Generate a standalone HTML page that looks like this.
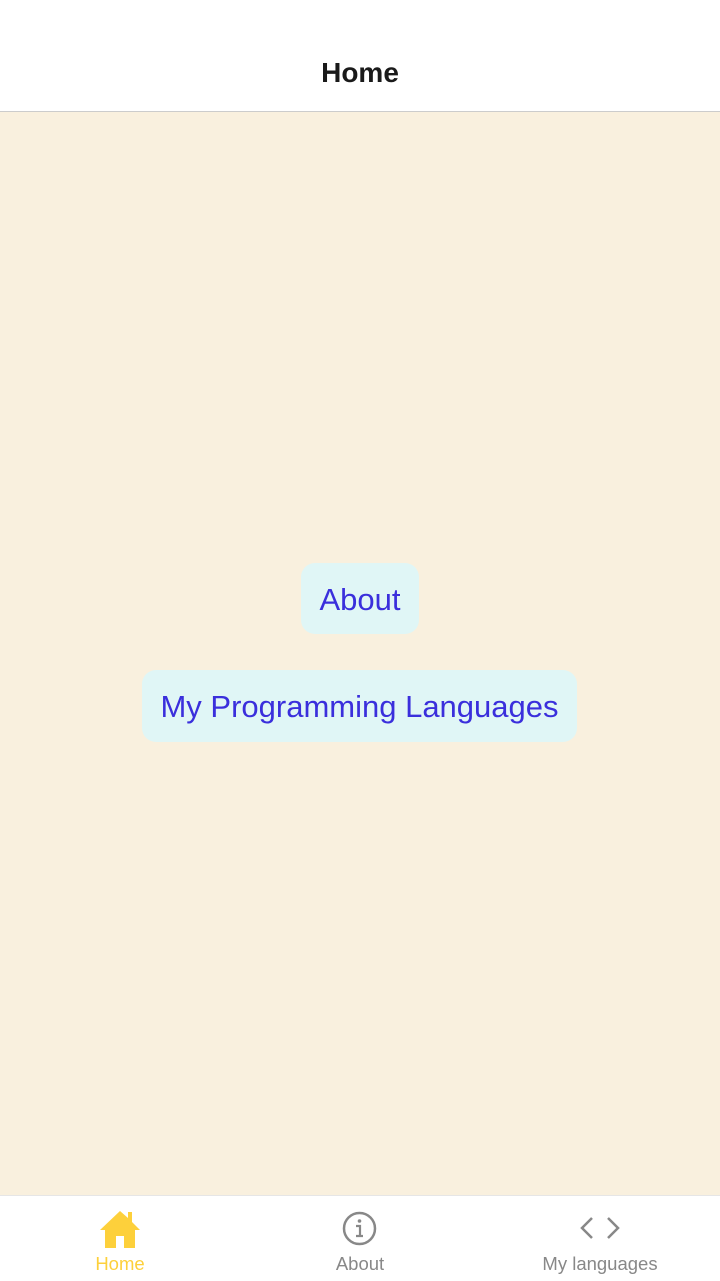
<!DOCTYPE html>
<html><head><style>
body{margin:0;width:720px;height:1280px;position:relative;font-family:"Liberation Sans",sans-serif;background:#f9f0de;overflow:hidden}
.hdr{position:absolute;top:0;left:0;width:720px;height:111px;background:#fff;border-bottom:1px solid #ccc}
.hdr div{position:absolute;top:57px;width:100%;text-align:center;font-size:28px;font-weight:bold;color:#1a1a1a}
.btn{position:absolute;background:#e0f6f6;border-radius:14px;color:#3a2fdc;font-size:31px;text-align:center;line-height:74px}
.tab{position:absolute;top:1195px;left:0;width:720px;height:85px;background:#fff;border-top:1px solid #e6e6e6}
.t{position:absolute;top:57px;width:240px;text-align:center;font-size:18.5px;color:#888}
</style></head><body>
<div class="hdr"><div>Home</div></div>
<div class="btn" style="left:301px;top:563px;width:118px;height:71px">About</div>
<div class="btn" style="left:142px;top:670px;width:435px;height:72px">My Programming Languages</div>
<div class="tab">
<svg style="position:absolute;left:99px;top:14px" width="42" height="38" viewBox="0 0 42 38"><path d="M21 1 L1 20 H6 V38 H17 V26 H25 V38 H36 V20 H41 L33 12 V2 H29 V8 Z" fill="#fdd03b"/></svg>
<svg style="position:absolute;left:342px;top:15px" width="35" height="35" viewBox="0 0 35 35"><circle cx="17.5" cy="17.5" r="15.5" fill="none" stroke="#888" stroke-width="2.5"/><circle cx="17.5" cy="10" r="1.8" fill="#888"/><path d="M14 15 H18 V25 M14 25 H21" fill="none" stroke="#888" stroke-width="2.2"/></svg>
<svg style="position:absolute;left:580px;top:20px" width="40" height="24" viewBox="0 0 40 24"><path d="M12 2 L2 12 L12 22 M28 2 L38 12 L28 22" fill="none" stroke="#888" stroke-width="2.5"/></svg>
<div class="t" style="left:0;color:#fdd03b">Home</div>
<div class="t" style="left:240px">About</div>
<div class="t" style="left:480px">My languages</div>
</div>
</body></html>
